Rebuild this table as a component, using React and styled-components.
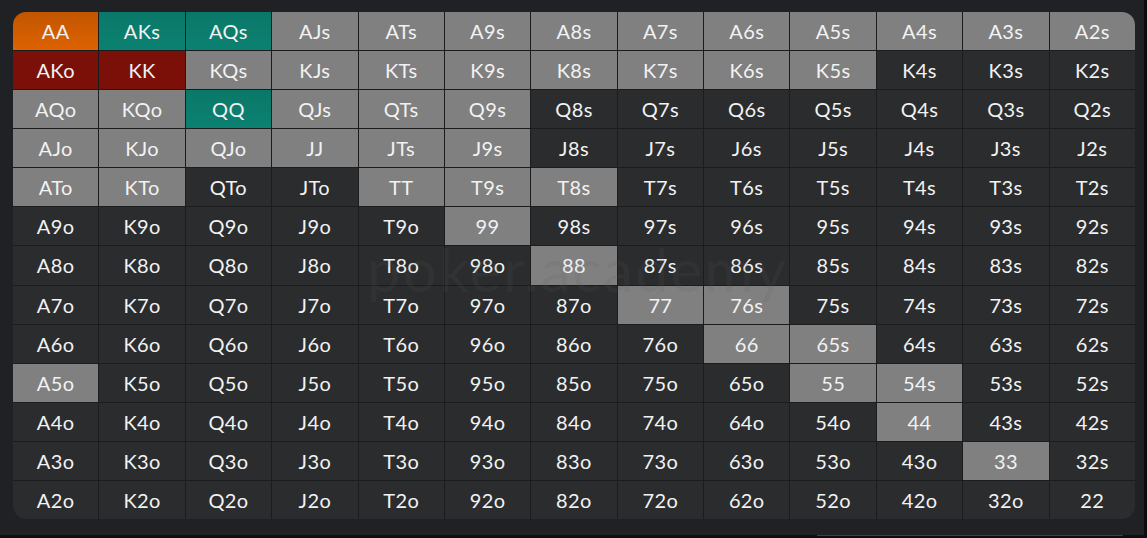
import React from "react";
import styled, { createGlobalStyle, css } from "styled-components";

const Global = createGlobalStyle`
  html, body { margin: 0; padding: 0; background: #0d0e0f; }
  body { width: 1147px; height: 538px; overflow: hidden; }
`;

const Panel = styled.div`
  width: 1144px;
  height: 535px;
  background: #1f2124;
  box-sizing: border-box;
  padding: 12px 9px 0 13px;
  position: relative;
`;

const Grid = styled.div`
  position: relative;
  width: 1122px;
  height: 507px;
  display: grid;
  grid-template-columns: repeat(13, 1fr);
  grid-template-rows: repeat(13, 1fr);
  gap: 1px;
  background: #1b1c1e;
  border-radius: 13px;
  overflow: hidden;
`;

const palette = {
  dark: css`background: #2b2c2e;`,
  gray: css`background: #808080;`,
  teal: css`background: linear-gradient(180deg, #0a7869 0%, #0c8171 100%);`,
  red: css`background: #7a1008;`,
  orange: css`background: linear-gradient(180deg, #c25600 0%, #de6200 100%);`,
};

const Cell = styled.div`
  display: flex;
  align-items: center;
  justify-content: center;
  font-family: Lato, "Open Sans", sans-serif;
  font-size: 20px;
  color: #f2f2f2;
  letter-spacing: 0.4px;
  ${(p) => palette[p.$tone]}
`;

const Watermark = styled.div`
  position: absolute;
  left: 354px;
  top: 221px;
  font-family: Lato, "Open Sans", sans-serif;
  font-size: 60px;
  letter-spacing: 2px;
  color: rgba(90, 92, 96, 0.13);
  pointer-events: none;
  white-space: nowrap;
`;

const ScrollTrack = styled.div`
  position: absolute;
  left: 817px;
  bottom: -1px;
  width: 306px;
  height: 1px;
  background: #3d3f42;
`;

const ranks = ["A", "K", "Q", "J", "T", "9", "8", "7", "6", "5", "4", "3", "2"];

const special = {
  AA: "orange",
  AKs: "teal",
  AQs: "teal",
  QQ: "teal",
  AKo: "red",
  KK: "red",
};

const grayHands = new Set([
  "AJs", "ATs", "A9s", "A8s", "A7s", "A6s", "A5s", "A4s", "A3s", "A2s",
  "KQs", "KJs", "KTs", "K9s", "K8s", "K7s", "K6s", "K5s",
  "AQo", "KQo", "QJs", "QTs", "Q9s",
  "AJo", "KJo", "QJo", "JJ", "JTs", "J9s",
  "ATo", "KTo", "TT", "T9s", "T8s",
  "99", "88", "77", "76s", "66", "65s", "A5o", "55", "54s", "44", "33",
]);

function handName(i, j) {
  if (i === j) return ranks[i] + ranks[j];
  if (j > i) return ranks[i] + ranks[j] + "s";
  return ranks[j] + ranks[i] + "o";
}

export default function App() {
  const cells = [];
  for (let i = 0; i < 13; i++) {
    for (let j = 0; j < 13; j++) {
      const h = handName(i, j);
      const tone = special[h] || (grayHands.has(h) ? "gray" : "dark");
      cells.push(
        <Cell key={h} $tone={tone}>
          {h}
        </Cell>
      );
    }
  }
  return (
    <>
      <Global />
      <Panel>
        <Grid>
          {cells}
          <Watermark aria-hidden="true">poker.academy</Watermark>
        </Grid>
        <ScrollTrack />
      </Panel>
    </>
  );
}
